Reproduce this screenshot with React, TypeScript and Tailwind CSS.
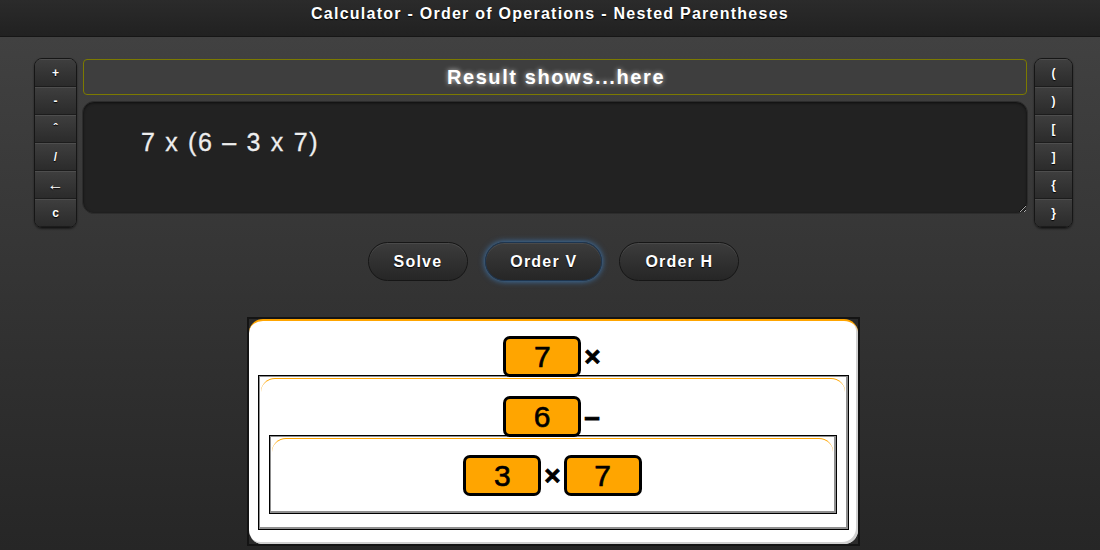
import type { ReactNode } from 'react';

const leftKeys = ['+', '-', 'ˆ', '/', '←', 'c'];
const rightKeys = ['(', ')', '[', ']', '{', '}'];

function KeyColumn({ keys, width }: { keys: string[]; width: string }) {
  return (
    <div
      className={`${width} flex h-[170px] flex-col overflow-hidden rounded-[8px] border border-[#161616] shadow-[0_1px_2px_rgba(0,0,0,0.5)]`}
    >
      {keys.map((k, i) => (
        <button
          key={i}
          className={`flex flex-1 items-center justify-center border-t border-b border-t-[#4e4e4e] border-b-[#1c1c1c] bg-gradient-to-b from-[#3e3e3e] to-[#2b2b2b] font-bold leading-none text-white [text-shadow:0_1px_1px_#000] ${
            k === '←' ? 'text-[16px]' : 'text-[12px]'
          }`}
        >
          {k}
        </button>
      ))}
    </div>
  );
}

function Token({ value }: { value: string }) {
  return (
    <div className="relative z-10 flex h-[41px] w-[78px] items-center justify-center rounded-[7px] border-[3px] border-black bg-[#ffa500] text-[30px] leading-none text-black [-webkit-text-stroke:0.6px_#000]">
      {value}
    </div>
  );
}

function Op({ sym }: { sym: string }) {
  return (
    <span className="mx-[3px] text-[28px] font-bold leading-none text-black [-webkit-text-stroke:0.8px_#000]">
      {sym}
    </span>
  );
}

function Nest({ row, children, pad, pt, pb }: { row: ReactNode; children?: ReactNode; pad: string; pt: string; pb: string }) {
  return (
    <div className="border border-black">
      <div className="border border-r-2 border-b-2 border-[#8f8f8f] bg-white p-[1px]">
        <div className={`rounded-t-[14px] border-t border-[#ffa500] ${pad} ${pt} ${pb}`}>
          <div className={`flex items-center justify-center ${children ? '-mb-[2px]' : ''}`}>{row}</div>
          {children}
        </div>
      </div>
    </div>
  );
}

export default function App() {
  return (
    <div
      className="min-h-[550px] w-full bg-gradient-to-b from-[#434343] to-[#262626] text-white"
      style={{ fontFamily: '"Liberation Sans", Arial, sans-serif' }}
    >
      <header className="flex h-[37px] justify-center border-b border-[#161616] bg-gradient-to-b from-[#2b2b2b] to-[#212121] pt-[4px]">
        <h1 className="text-[16px] font-bold leading-[20px] tracking-[1.25px] [text-shadow:0_1px_1px_#000]">
          Calculator - Order of Operations - Nested Parentheses
        </h1>
      </header>

      <div className="flex gap-[5px] pr-[27px] pl-[34px] pt-[21px]">
        <KeyColumn keys={leftKeys} width="w-[43px]" />
        <div className="flex flex-1 flex-col gap-[6px]">
          <div className="mx-[1px] mt-[1px] flex h-[36px] items-center justify-center rounded-[4px] border border-[#7c7a00] bg-[#3e3e3e] pl-[2px] text-[20px] font-bold tracking-[1.6px] [text-shadow:0_0_5px_rgba(255,255,255,0.75)]">
            Result shows...here
          </div>
          <textarea
            readOnly
            value="7 x (6 – 3 x 7)"
            className="h-[113px] w-full resize-y rounded-[12px] border border-[#2c2c2c] bg-[#222222] pt-[26px] pl-[58px] text-[25px] leading-[29px] tracking-[1.7px] text-[#eeeeee] shadow-[inset_0_1px_3px_rgba(0,0,0,0.6)] outline-none [-webkit-text-stroke:0.3px_#eee]"
            style={{ fontFamily: '"Liberation Sans", Arial, sans-serif' }}
          />
        </div>
        <div className="ml-[1px]">
          <KeyColumn keys={rightKeys} width="w-[39px]" />
        </div>
      </div>

      <div className="mt-[14px] flex justify-center gap-[17px] pl-[7px]">
        <button className="h-[39px] rounded-[20px] border border-[#161616] bg-gradient-to-b from-[#3c3c3c] to-[#262626] px-[25px] text-[16px] font-bold tracking-[1.2px] shadow-[inset_0_1px_0_#4a4a4a] [text-shadow:0_1px_1px_#000]">
          Solve
        </button>
        <button className="h-[39px] rounded-[20px] border border-[#1d3550] bg-gradient-to-b from-[#3c3c3c] to-[#262626] px-[24px] text-[16px] font-bold tracking-[1.2px] shadow-[0_0_6px_#3f7fc0,inset_0_1px_0_#4a4a4a] [text-shadow:0_1px_1px_#000]">
          Order V
        </button>
        <button className="h-[39px] rounded-[20px] border border-[#161616] bg-gradient-to-b from-[#3c3c3c] to-[#262626] px-[25px] text-[16px] font-bold tracking-[1.2px] shadow-[inset_0_1px_0_#4a4a4a] [text-shadow:0_1px_1px_#000]">
          Order H
        </button>
      </div>

      <div className="mt-[36px] flex justify-center pl-[7px]">
        <div className="w-[613px] border-2 border-[#141414] bg-[#2b2b2b]">
          <div className="rounded-[14px] border-t-2 border-[#ffa500] bg-white px-[9px] pt-[15px] pb-[14px] shadow-[inset_-2px_-2px_0_#d0d0d0]">
            <div className="-mb-[2px] flex items-center justify-center">
              <Token value="7" />
              <Op sym="×" />
            </div>
            <Nest
              pad="px-[8px]"
              pt="pt-[17px]"
              pb="pb-[12px]"
              row={
                <>
                  <Token value="6" />
                  <Op sym="–" />
                </>
              }
            >
              <Nest
                pad="px-[7px]"
                pt="pt-[16px]"
                pb="pb-[14px]"
                row={
                  <>
                    <Token value="3" />
                    <Op sym="×" />
                    <Token value="7" />
                  </>
                }
              />
            </Nest>
          </div>
        </div>
      </div>
    </div>
  );
}
